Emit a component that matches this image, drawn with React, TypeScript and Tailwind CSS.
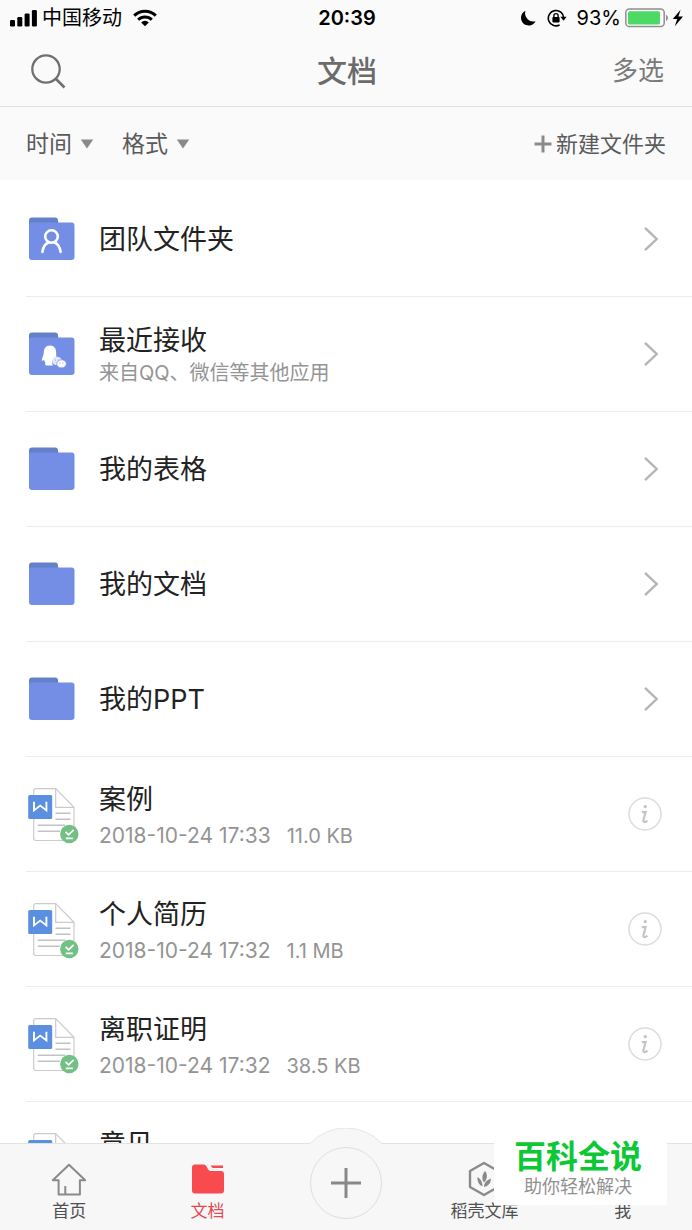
import React from "react";

type FolderBadge = "team" | "chat";

interface FolderItem {
  name: string;
  note?: string;
  badge?: FolderBadge;
}

interface FileItem {
  name: string;
  date?: string;
  size?: string;
}

const FOLDERS: FolderItem[] = [
  { name: "团队文件夹", badge: "team" },
  { name: "最近接收", note: "来自QQ、微信等其他应用", badge: "chat" },
  { name: "我的表格" },
  { name: "我的文档" },
  { name: "我的PPT" },
];

const FILES: FileItem[] = [
  { name: "案例", date: "2018-10-24 17:33", size: "11.0 KB" },
  { name: "个人简历", date: "2018-10-24 17:32", size: "1.1 MB" },
  { name: "离职证明", date: "2018-10-24 17:32", size: "38.5 KB" },
  { name: "意见" },
];

function SignalIcon() {
  return (
    <svg width="28" height="18" viewBox="0 0 28 18" aria-hidden="true">
      <rect x="0" y="11" width="5" height="6.5" rx="1.3" />
      <rect x="7.3" y="8" width="5" height="9.5" rx="1.3" />
      <rect x="14.6" y="4.5" width="5" height="13" rx="1.3" />
      <rect x="21.9" y="1" width="5" height="16.5" rx="1.3" />
    </svg>
  );
}

function WifiIcon() {
  return (
    <svg width="24" height="18" viewBox="0 0 24 18" aria-hidden="true">
      <g fill="none" stroke="black" strokeWidth="3">
        <path d="M1.2 6.6A15.4 15.4 0 0 1 22.8 6.6" />
        <path d="M5.2 10.8A9.7 9.7 0 0 1 18.8 10.8" />
      </g>
      <path d="M12 17.2L8.2 13.4A5.4 5.4 0 0 1 15.8 13.4Z" />
    </svg>
  );
}

function MoonIcon() {
  return (
    <svg width="16" height="16" viewBox="0 0 16 16" aria-hidden="true">
      <path d="M5.5 0.8A7.7 7.7 0 1 0 15.6 11.2A8.2 8.2 0 0 1 5.5 0.8Z" />
    </svg>
  );
}

function RotationLockIcon() {
  return (
    <svg width="20" height="18" viewBox="0 0 20 18" aria-hidden="true">
      <path
        d="M12.6 16A7.7 7.7 0 1 1 16.7 9"
        fill="none"
        stroke="black"
        strokeWidth="1.6"
      />
      <path d="M13.4 7.8H19.6L16.5 11.8Z" />
      <rect x="5.4" y="8" width="7.2" height="5.4" rx="0.8" />
      <path
        d="M6.9 8.4V6.7A2.1 2.1 0 0 1 11.1 6.7V8.4"
        fill="none"
        stroke="black"
        strokeWidth="1.4"
      />
    </svg>
  );
}

function BatteryIcon() {
  return (
    <svg width="44" height="20" viewBox="0 0 44 20" aria-hidden="true">
      <rect
        x="0.8"
        y="1"
        width="38.4"
        height="17.6"
        rx="3.6"
        fill="white"
        stroke="#8e8e8e"
        strokeWidth="1.5"
      />
      <rect x="3" y="3.2" width="32" height="13.2" rx="1.5" fill="#4cd964" />
      <path d="M41 6.8A3.4 3.4 0 0 1 41 13Z" fill="#8e8e8e" />
    </svg>
  );
}

function BoltIcon() {
  return (
    <svg width="12" height="18" viewBox="0 0 12 18" aria-hidden="true">
      <path d="M8.6 0.8L0.8 10H5.2L2.8 17.2L11 7.4H6.4Z" />
    </svg>
  );
}

function Caret() {
  return (
    <svg width="14" height="10" viewBox="0 0 14 10" aria-hidden="true">
      <path d="M0.8 0.5H13.2L7 9.5Z" fill="#8a8a8a" />
    </svg>
  );
}

function FolderIcon({ badge }: { badge?: FolderBadge }) {
  return (
    <svg width="48" height="44" viewBox="-1 0 48 44" aria-hidden="true">
      <path
        d="M0 12V3.5A3 3 0 0 1 3 0.5H26A3 3 0 0 1 29 3.5L30 12Z"
        fill="#6380c9"
      />
      <path
        d="M0 7.5A2 2 0 0 1 2 5.5H42.5A3 3 0 0 1 45.5 8.5V40A3 3 0 0 1 42.5 43H3A3 3 0 0 1 0 40Z"
        fill="#748ee6"
      />
      {badge === "team" && (
        <g fill="none" stroke="white" strokeWidth="2.6" strokeLinecap="round">
          <circle cx="22.5" cy="19.5" r="6.3" />
          <path d="M13.4 35C14 30 16 27 19.5 25.5M25.5 25.5C29 27 31 30 31.6 35" />
        </g>
      )}
      {badge === "chat" && (
        <g>
          <path
            d="M21 13.5C16.5 13.5 14.8 17 14.8 20.5C14.8 23.5 12.6 26 12.8 29C13.6 29 14.3 28.5 15 27.8C15.4 29.5 16.2 30.5 16.5 31C15.7 32 16 33.5 18 33.5H24C22.3 30.5 23.5 26 27.4 24.6C27 22.5 27.2 21.5 27.2 20.5C27.2 17 25.5 13.5 21 13.5Z"
            fill="white"
          />
          <ellipse cx="28" cy="29" rx="4.8" ry="4.2" fill="#e3e9fb" />
          <ellipse
            cx="32.5"
            cy="31.8"
            rx="4.8"
            ry="4"
            fill="white"
            stroke="#748ee6"
            strokeWidth="0.7"
          />
          <g fill="#748ee6">
            <circle cx="26.5" cy="28" r="0.6" />
            <circle cx="29.5" cy="28" r="0.6" />
            <circle cx="31" cy="31" r="0.6" />
            <circle cx="34" cy="31" r="0.6" />
          </g>
        </g>
      )}
    </svg>
  );
}

function WordFileIcon() {
  return (
    <svg width="52" height="56" viewBox="0 0 52 56" fill="none" aria-hidden="true">
      <path
        d="M5.7 50.5V2.7A2 2 0 0 1 7.7 0.7H27.7L46 19.3V50.5A2 2 0 0 1 44 52.5H7.7A2 2 0 0 1 5.7 50.5Z"
        fill="white"
        stroke="#cbcbcb"
        strokeWidth="1.2"
      />
      <path d="M27.7 0.7V19.3H46" stroke="#cbcbcb" strokeWidth="1.2" />
      <path
        d="M27.5 25.3H42.5M27.5 31.3H42.5M9.7 37.3H37M9.7 43.3H32"
        stroke="#c2c2c2"
        strokeWidth="1.4"
      />
      <rect x="0.2" y="7" width="24" height="24" rx="1.5" fill="#5b8fe0" />
      <path
        d="M6 13.8V22.4L12.2 17.6L18.4 22.4V13.8"
        stroke="white"
        strokeWidth="1.9"
      />
      <circle cx="41.3" cy="46" r="9.2" fill="#73c085" />
      <path
        d="M37.6 43.8L40.6 46.8L45.6 41.8M37.8 50.4H44.8"
        stroke="white"
        strokeWidth="1.8"
      />
    </svg>
  );
}

function Chevron() {
  return (
    <svg width="20" height="26" viewBox="0 0 20 26" fill="none" aria-hidden="true">
      <path d="M3 1.8L14.7 13L3 24.2" stroke="#b5b5b5" strokeWidth="2.4" />
    </svg>
  );
}

function InfoIcon() {
  return (
    <svg width="34" height="34" viewBox="0 0 34 34" fill="none" aria-hidden="true">
      <circle cx="17" cy="17" r="16" stroke="#dcdcdc" strokeWidth="1.5" />
      <circle cx="17.3" cy="9.6" r="1.7" fill="#c4c4c4" />
      <path
        d="M13.8 15.2H17.6L15.4 23.2C15 25.3 16.8 25.8 19.4 23.6"
        stroke="#c4c4c4"
        strokeWidth="2.2"
      />
    </svg>
  );
}

function FolderRow({ name, note, badge }: FolderItem) {
  return (
    <li className="ml-[26px] border-b border-[#ececec]">
      <a href="#" className="flex h-[114px] items-center pr-[30px] pl-0.5">
        <span className="w-[71px] shrink-0">
          <FolderIcon badge={badge} />
        </span>
        <span className="flex-1 pt-0.5">
          <span className="block text-[27px] leading-9 text-[#222]">{name}</span>
          {note && (
            <span className="block text-xl leading-7 text-[#949494]">{note}</span>
          )}
        </span>
        <Chevron />
      </a>
    </li>
  );
}

function FileRow({ name, date, size }: FileItem) {
  return (
    <li className="ml-[26px] flex h-[115px] items-center border-b border-[#ececec] pr-[30px] pl-0.5">
      <span className="w-[71px] shrink-0 pt-1">
        <WordFileIcon />
      </span>
      <div className="flex-1 self-start pt-[25px]">
        <div className="text-[27px] leading-9 text-[#222]">{name}</div>
        {date && (
          <div className="flex items-baseline gap-4 leading-9 text-[#949494]">
            <span className="text-[21px]">{date}</span>
            <span className="text-[20px]">{size}</span>
          </div>
        )}
      </div>
      <button type="button" aria-label={name}>
        <InfoIcon />
      </button>
    </li>
  );
}

function Filter({ label }: { label: string }) {
  return (
    <label className="flex items-center gap-2">
      <select
        aria-label={label}
        className="appearance-none bg-transparent text-[23px] leading-8 text-[#5a5a5a]"
      >
        <option>{label}</option>
      </select>
      <Caret />
    </label>
  );
}

function Tab({
  label,
  active,
  children,
}: {
  label: string;
  active?: boolean;
  children: React.ReactNode;
}) {
  return (
    <a
      href="#"
      className={
        active
          ? "flex flex-col items-center pt-[17px] text-[#e04a55]"
          : "flex flex-col items-center pt-[17px] text-[#505050]"
      }
    >
      <span className="flex h-9 items-center">{children}</span>
      <span className="text-[17px] leading-7">{label}</span>
    </a>
  );
}

function TabBar() {
  return (
    <nav className="relative grid h-[87px] shrink-0 grid-cols-5 border-t border-[#e2e2e2] bg-[#f7f7f7]">
      <Tab label="首页">
        <svg width="36" height="33" viewBox="0 0 36 33" fill="none" aria-hidden="true">
          <path
            d="M18 1.8L34.2 17.3H28.9V31.4H7.6V17.3H1.8ZM14.3 31V23"
            stroke="#8a8a8a"
            strokeWidth="2"
            strokeLinejoin="round"
          />
        </svg>
      </Tab>
      <Tab label="文档" active>
        <svg width="32" height="30" viewBox="0 0 32 30" fill="#f84b50" aria-hidden="true">
          <path d="M0 3.5A3 3 0 0 1 3 0.5H11.5C15.5 0.5 15 7 19 7H29A3 3 0 0 1 32 10V26.5A3 3 0 0 1 29 29.5H3A3 3 0 0 1 0 26.5Z" />
          <path d="M18.5 1.6H31V4H20.5Z" />
        </svg>
      </Tab>
      <div className="relative flex justify-center pt-[3px]">
        <svg
          className="absolute -top-4"
          width="76"
          height="18"
          viewBox="0 0 76 18"
          aria-hidden="true"
        >
          <path d="M1 18V16.5A49.5 49.5 0 0 1 75 16.5V18Z" fill="#f7f7f7" />
          <path d="M2 15.5A49.5 49.5 0 0 1 74 15.5" fill="none" stroke="#e6e6e6" />
        </svg>
        <button
          type="button"
          aria-label="新建"
          className="relative flex size-[72px] items-center justify-center rounded-full border border-[#dedede]"
        >
          <svg width="32" height="32" viewBox="0 0 32 32" aria-hidden="true">
            <path d="M1 16H31M16 1V31" stroke="#888" strokeWidth="3" />
          </svg>
        </button>
      </div>
      <Tab label="稻壳文库">
        <svg width="32" height="36" viewBox="0 0 32 36" fill="none" aria-hidden="true">
          <path
            d="M16 2L30 10V26L16 34L2 26V10Z"
            stroke="#8a8a8a"
            strokeWidth="2.4"
            strokeLinejoin="round"
          />
          <path
            d="M17 10C20 13.5 19.5 18 16 21.5C13.5 18 14 13.5 17 10ZM9.5 16C13 18 14.5 21 14.5 25.5C11 24 9 20 9.5 16ZM23 17.5C23 22 20.5 25 16 26C16 22 18.5 19 23 17.5Z"
            fill="#8a8a8a"
          />
        </svg>
      </Tab>
      <Tab label="我">
        <svg width="32" height="32" viewBox="0 0 32 32" fill="none" aria-hidden="true">
          <circle cx="16" cy="10" r="8" stroke="#8a8a8a" strokeWidth="2" />
          <path
            d="M3 30C4 22 9 18 16 18C23 18 28 22 29 30"
            stroke="#8a8a8a"
            strokeWidth="2"
          />
        </svg>
      </Tab>
    </nav>
  );
}

export default function App() {
  return (
    <div className="relative flex h-screen flex-col overflow-hidden bg-white font-['Inter','Noto_Sans_CJK_SC',sans-serif]">
      <header className="shrink-0 border-b border-[#e0e0e0] bg-[#fafafa]">
        <div className="grid h-[35px] grid-cols-[1fr_auto_1fr] items-center pr-2 pl-[10px] text-xl leading-7 text-black">
          <div className="flex items-center">
            <SignalIcon />
            <span className="ml-1">中国移动</span>
            <span className="ml-[11px]">
              <WifiIcon />
            </span>
          </div>
          <div className="font-semibold">20:39</div>
          <div className="flex items-center justify-end">
            <MoonIcon />
            <span className="ml-[11px]">
              <RotationLockIcon />
            </span>
            <span className="mr-1 ml-[10px]">93%</span>
            <BatteryIcon />
            <span className="ml-[3px]">
              <BoltIcon />
            </span>
          </div>
        </div>
        <div className="grid h-[71px] grid-cols-[1fr_auto_1fr] items-center pr-[28px] pl-[30px] text-[#6b6b6b]">
          <button type="button" aria-label="搜索" className="justify-self-start">
            <svg width="36" height="36" viewBox="0 0 36 36" fill="none" aria-hidden="true">
              <circle cx="16" cy="16" r="13.7" stroke="#707070" strokeWidth="2.3" />
              <path d="M25.5 25.5L34.5 34.5" stroke="#707070" strokeWidth="2.6" />
            </svg>
          </button>
          <h1 className="text-3xl font-medium">文档</h1>
          <button type="button" className="justify-self-end text-[26px] text-[#7a7a7a]">
            多选
          </button>
        </div>
      </header>

      <div className="flex h-[73px] shrink-0 items-center gap-7 bg-[#fafafa] px-[26px]">
        <Filter label="时间" />
        <Filter label="格式" />
        <button
          type="button"
          className="ml-auto flex items-center gap-1 text-[22px] leading-8 text-[#5a5a5a]"
        >
          <svg width="18" height="18" viewBox="0 0 18 18" aria-hidden="true">
            <path d="M0.5 9H17.5M9 0.5V17.5" stroke="#8a8a8a" strokeWidth="3" />
          </svg>
          新建文件夹
        </button>
      </div>

      <ul className="min-h-0 flex-1 overflow-hidden pt-0.5">
        {FOLDERS.map((folder) => (
          <FolderRow key={folder.name} {...folder} />
        ))}
        {FILES.map((file) => (
          <FileRow key={file.name} {...file} />
        ))}
      </ul>

      <TabBar />

      <div className="absolute right-[25px] bottom-[25px] bg-white pt-0.5 pr-[25px] pb-1.5 pl-5 text-center">
        <div className="text-[32px] leading-9 font-bold text-[#0cc835]">百科全说</div>
        <div className="text-lg leading-6 text-[#909090]">助你轻松解决</div>
      </div>
    </div>
  );
}
